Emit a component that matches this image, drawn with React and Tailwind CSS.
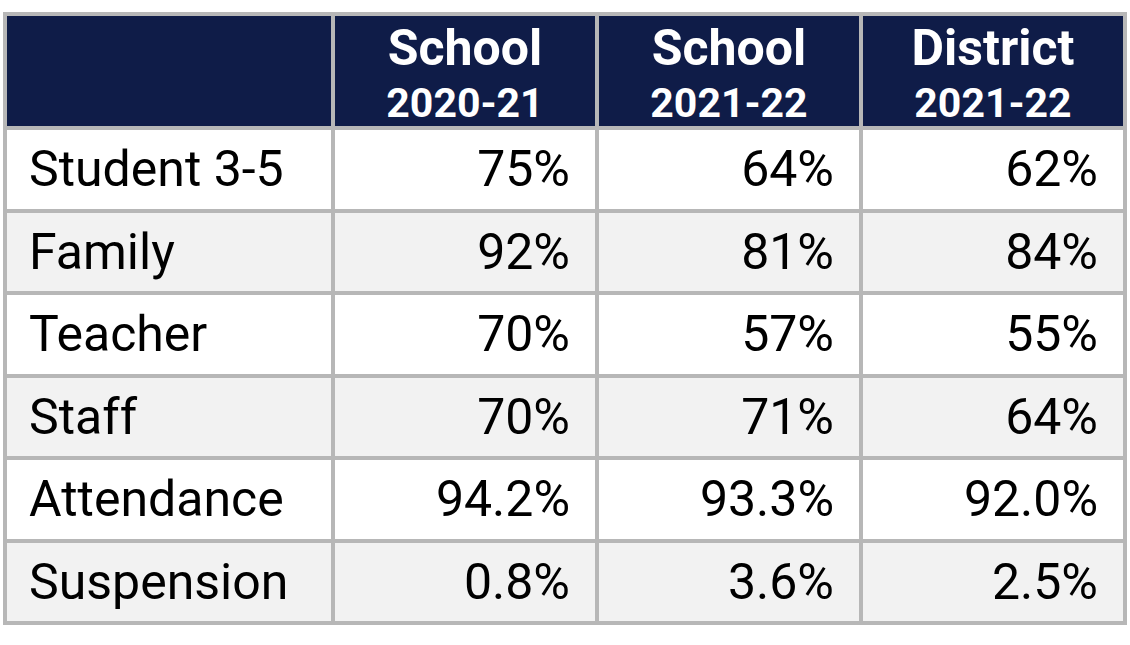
import React from "react";

const rows = [
  ["Student 3-5", "75%", "64%", "62%"],
  ["Family", "92%", "81%", "84%"],
  ["Teacher", "70%", "57%", "55%"],
  ["Staff", "70%", "71%", "64%"],
  ["Attendance", "94.2%", "93.3%", "92.0%"],
  ["Suspension", "0.8%", "3.6%", "2.5%"],
];

const heads = [
  ["School", "2020-21"],
  ["School", "2021-22"],
  ["District", "2021-22"],
];

export default function App() {
  return (
    <div className="w-[1130px] h-[645px] bg-white pt-[12px] pl-[3px]" style={{ fontFamily: "Roboto, 'Liberation Sans', sans-serif" }}>
      <div className="grid w-[1124px] grid-cols-[324px_260px_260px_260px] grid-rows-[110px_repeat(6,78.5px)] gap-[4px] p-[4px] bg-[#b7b7b7]">
        <div className="bg-[#0f1c48]" />
        {heads.map(([a, b], i) => (
          <div key={i} className="bg-[#0f1c48] text-white font-bold flex flex-col items-center justify-start pt-[7px]">
            <div className="text-[50px] leading-[50px]">{a}</div>
            <div className="text-[41px] leading-[41px] mt-[10px]">{b}</div>
          </div>
        ))}
        {rows.map((r, ri) => (
          <React.Fragment key={ri}>
            {r.map((c, ci) => (
              <div
                key={ci}
                className={`${ri % 2 === 1 ? "bg-[#f2f2f2]" : "bg-white"} text-black text-[50px] leading-none flex items-center ${ci === 0 ? "justify-start pl-[22px]" : "justify-end pr-[25px]"}`}
              >
                {c}
              </div>
            ))}
          </React.Fragment>
        ))}
      </div>
    </div>
  );
}
